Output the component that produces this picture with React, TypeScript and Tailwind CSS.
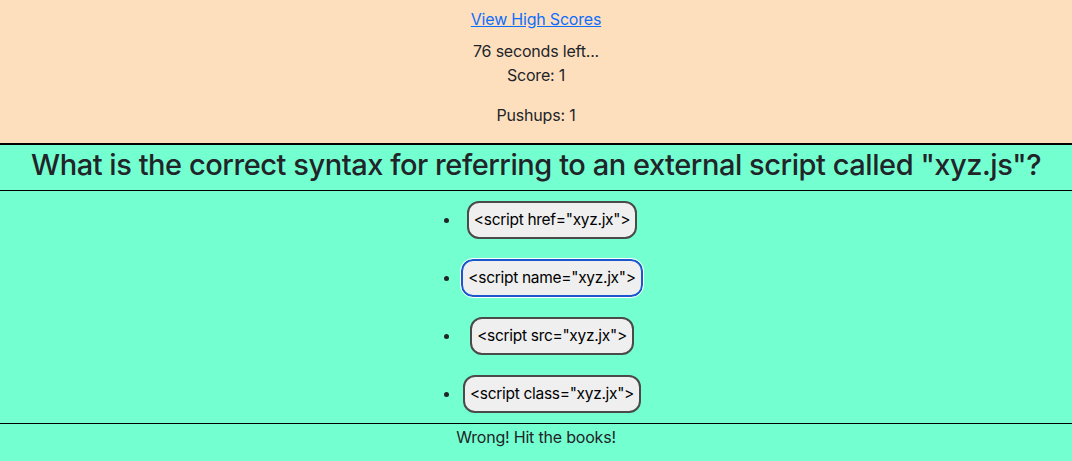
const answers = [
  { label: '<script href="xyz.jx">', focused: false },
  { label: '<script name="xyz.jx">', focused: true },
  { label: '<script src="xyz.jx">', focused: false },
  { label: '<script class="xyz.jx">', focused: false },
];

export default function App() {
  return (
    <div
      className="min-h-[461px] bg-[#74ffd0] text-[#212529] text-[16px] leading-[1.5]"
      style={{ fontFamily: 'Inter, "Noto Sans", sans-serif' }}
    >
      {/* Header / stats */}
      <header className="bg-[#fedfbd] border-b-2 border-black pt-[7px] pb-[16px] text-center tracking-[-0.2px]">
        <a href="#" className="text-[#0d6efd] underline">
          View High Scores
        </a>
        <p className="mt-[8px]">76 seconds left...</p>
        <p>Score: 1</p>
        <p className="mt-[16px]">Pushups: 1</p>
      </header>

      {/* Question */}
      <h1 className="border-b border-black text-center text-[29px] tracking-[-0.45px] font-medium leading-[36px] pt-[2px] pb-[7px] whitespace-nowrap">
        What is the correct syntax for referring to an external script called "xyz.js"?
      </h1>

      <ul className="w-fit mx-auto pl-8 list-disc">
        {answers.map((a) => (
          <li key={a.label} className="py-[10px] text-center">
            <button
              className={
                a.focused
                  ? 'h-[38px] px-[5px] rounded-[12px] bg-[#efefef] border-2 border-[#1a56cc] outline outline-1 outline-white text-black text-[15.5px] tracking-[-0.3px]'
                  : 'h-[38px] px-[5px] rounded-[12px] bg-[#efefef] border-2 border-[#4a4a4a] text-black text-[15.5px] tracking-[-0.3px]'
              }
            >
              {a.label}
            </button>
          </li>
        ))}
      </ul>

      <footer className="border-t border-black text-center pt-[1px] tracking-[-0.2px]">Wrong! Hit the books!</footer>
    </div>
  );
}
